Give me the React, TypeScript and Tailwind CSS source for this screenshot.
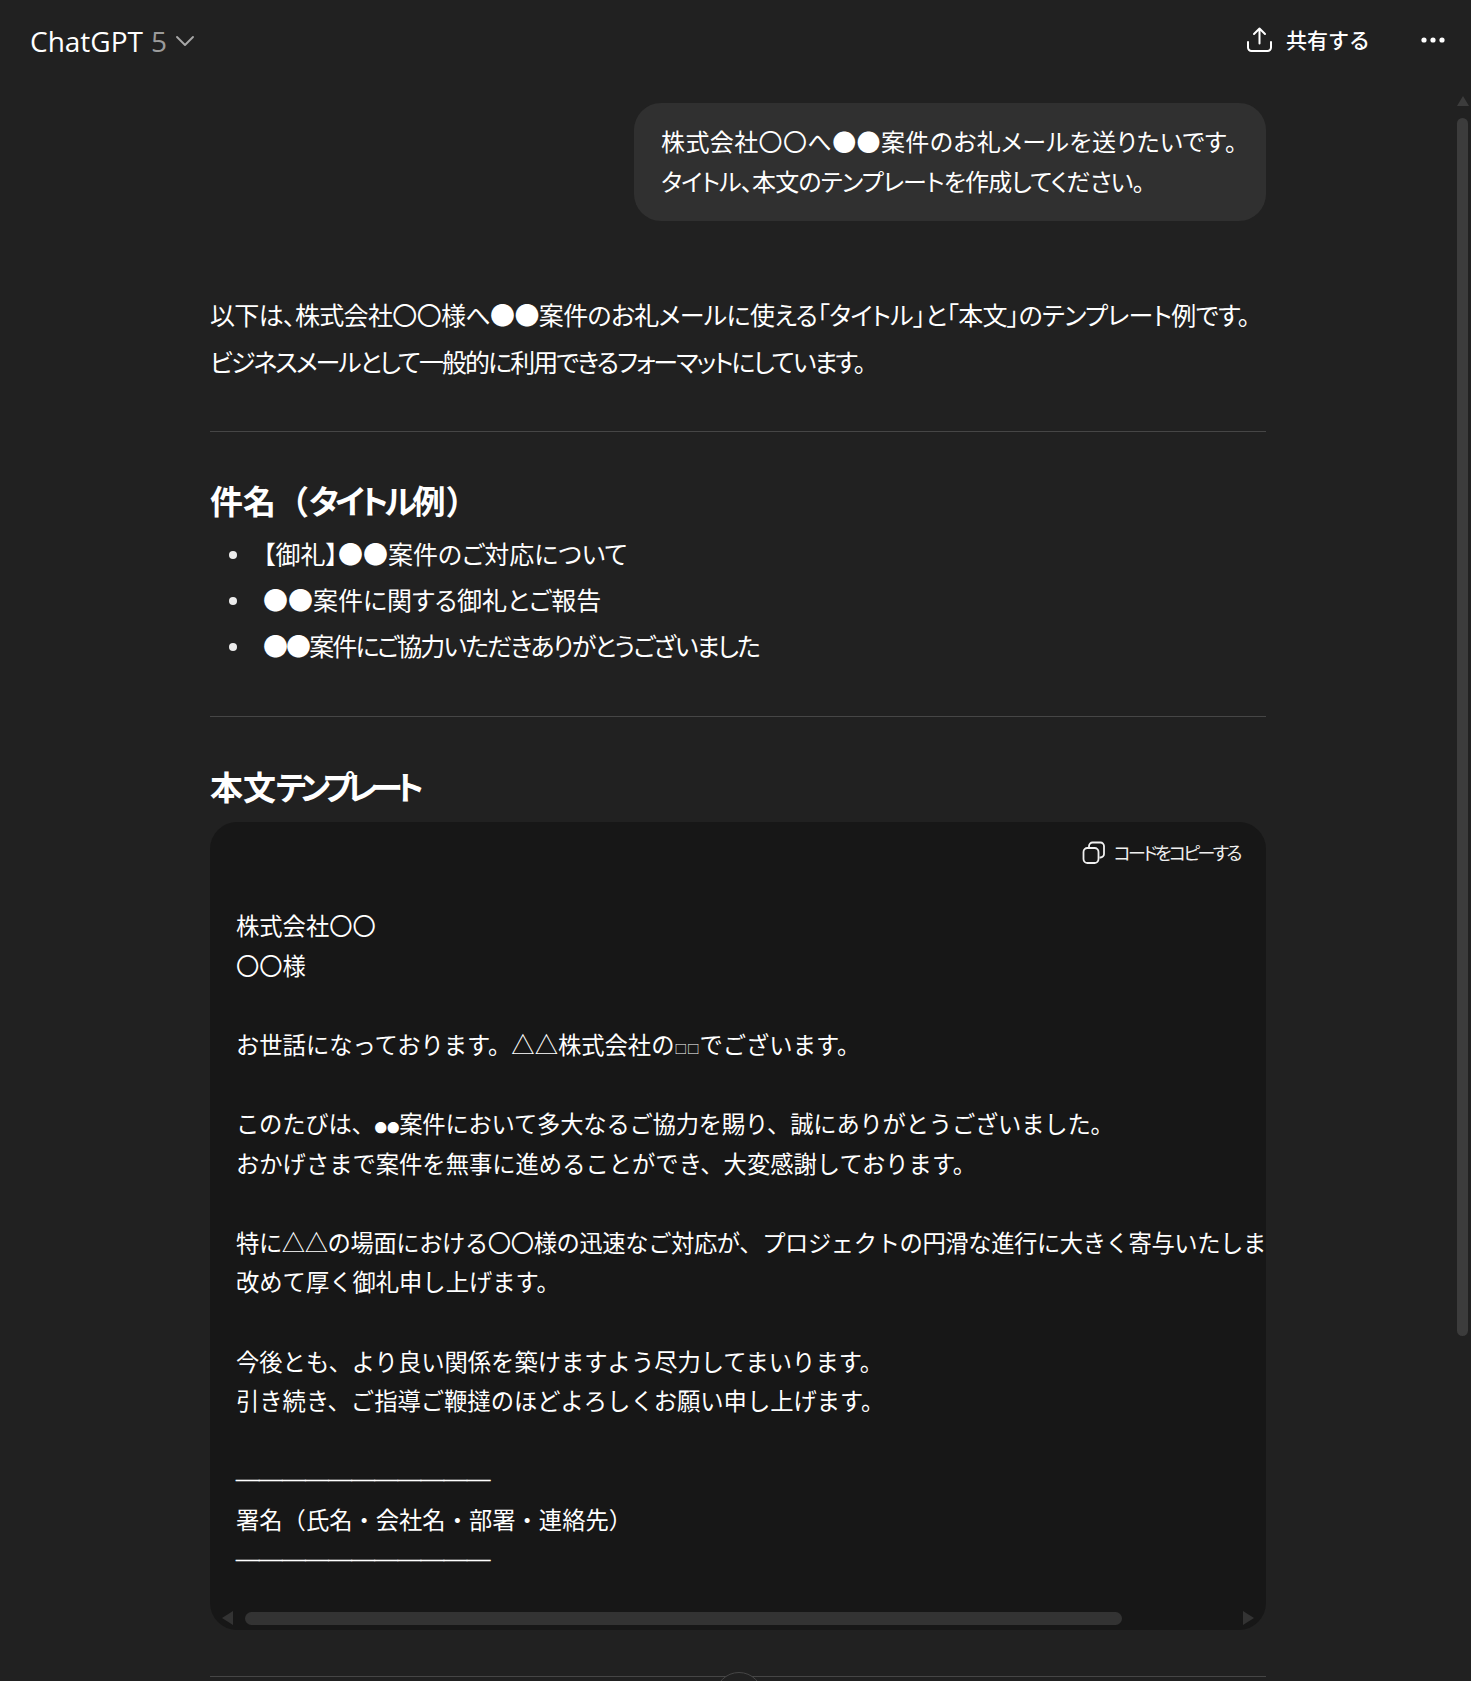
import { ChevronDown, ArrowDown } from "lucide-react";

const jp = "font-['Noto_Sans_CJK_JP','Noto_Sans',sans-serif]";
const palt = "[font-feature-settings:'palt']";

const codeLines = [
  { text: "株式会社〇〇" },
  { text: "〇〇様" },
  { text: "" },
  { text: "お世話になっております。△△株式会社の□□でございます。" },
  { text: "" },
  { text: "このたびは、●●案件において多大なるご協力を賜り、誠にありがとうございました。", tight: "tracking-[-0.2px]" },
  { text: "おかげさまで案件を無事に進めることができ、大変感謝しております。" },
  { text: "" },
  { text: "特に△△の場面における〇〇様の迅速なご対応が、プロジェクトの円滑な進行に大きく寄与いたしました。", tight: "tracking-[-0.4px]" },
  { text: "改めて厚く御礼申し上げます。" },
  { text: "" },
  { text: "今後とも、より良い関係を築けますよう尽力してまいります。" },
  { text: "引き続き、ご指導ご鞭撻のほどよろしくお願い申し上げます。" },
  { text: "" },
  { text: "───────────", tight: "tracking-[-0.2px]" },
  { text: "署名（氏名・会社名・部署・連絡先）" },
  { text: "───────────", tight: "tracking-[-0.2px]" },
];

const titles = [
  { text: "【御礼】●●案件のご対応について", className: "" },
  { text: "●●案件に関する御礼とご報告", className: "" },
  { text: "●●案件にご協力いただきありがとうございました", className: "tracking-[-1.9px]" },
];

// the ●● and □□ placeholders are half width in the code block
function CodeLine({ text, tight }: { text: string; tight?: string }) {
  if (text.startsWith("─")) {
    return <div className={`h-[39.6px] [-webkit-text-stroke:0.7px_white] ${tight ?? ""}`}>{text}</div>;
  }
  return (
    <div className={`h-[39.6px] ${tight ?? ""}`}>
      {text.split(/([□●]+)/).map((part, i) =>
        /[□●]/.test(part) ? (
          <span key={i} className="text-[12.5px]">
            {part}
          </span>
        ) : (
          part
        ),
      )}
    </div>
  );
}

function Header() {
  return (
    <header className="flex h-[80px] items-center justify-between pl-[30px] pr-[26px]">
      <div className="flex items-center pt-[1px] font-['Open_Sans',sans-serif] text-[28px] text-white">
        <span>ChatGPT</span>
        <span className="ml-[8px] text-[#9b9b9b]">5</span>
        <ChevronDown className="ml-[2px] h-[32px] w-[32px] text-[#a8a8a8]" strokeWidth={1.4} />
      </div>
      <div className="flex items-center pb-[1px]">
        <svg className="h-[27px] w-[27px] text-white" viewBox="0 0 27 27" fill="none" stroke="currentColor" strokeWidth="2" strokeLinecap="round" strokeLinejoin="round">
          <path d="M13.5 17.5V2.5M8 8l5.5-5.5L19 8" />
          <path d="M2 16v5.5a3.5 3.5 0 0 0 3.5 3.5h16a3.5 3.5 0 0 0 3.5-3.5V16" />
        </svg>
        <span className={`ml-[13px] text-[21px] font-medium text-white ${jp}`}>共有する</span>
        <svg className="ml-[51px] h-[6px] w-[24px] text-white" viewBox="0 0 24 6" fill="currentColor">
          <circle cx="3" cy="3" r="2.6" />
          <circle cx="12" cy="3" r="2.6" />
          <circle cx="21" cy="3" r="2.6" />
        </svg>
      </div>
    </header>
  );
}

function CodeBlock() {
  return (
    <div className="relative mt-[13px] h-[808px] overflow-hidden rounded-[27px] bg-[#171717]">
      <div className="flex h-[60px] items-center justify-end pr-[26px] text-[#f0f0f0]">
        <svg className="mr-[9px] h-[23px] w-[23px]" viewBox="0 0 23 23" fill="none" stroke="currentColor" strokeWidth="1.8">
          <rect x="1.5" y="7" width="15" height="15" rx="4" />
          <path d="M7 6V5a3.5 3.5 0 0 1 3.5-3.5h8A3.5 3.5 0 0 1 22 5v8a3.5 3.5 0 0 1-3.5 3.5h-1" />
        </svg>
        <span className={`text-[18px] tracking-[-2.6px] ${palt}`}>コードをコピーする</span>
      </div>
      <div className="whitespace-pre pl-[26px] pt-[24px] text-[23.3px] leading-[39.6px] text-white">
        {codeLines.map((line, i) => (
          <CodeLine key={i} text={line.text} tight={line.tight} />
        ))}
      </div>
      <div className="absolute bottom-[5px] left-0 flex h-[14px] w-full items-center px-[12px]">
        <span className="h-0 w-0 border-y-[7px] border-r-[11px] border-y-transparent border-r-[#333333]" />
        <div className="ml-[12px] h-[13px] w-[877px] rounded-full bg-[#333333]" />
        <span className="ml-auto h-0 w-0 border-y-[7px] border-l-[11px] border-y-transparent border-l-[#333333]" />
      </div>
    </div>
  );
}

export default function App() {
  return (
    <div className={`relative h-[1681px] w-[1471px] overflow-hidden bg-[#212121] ${jp}`}>
      <Header />

      <main className="ml-[210px] w-[1056px]">
        <div className="mt-[23px] flex justify-end">
          <div className={`w-[632px] rounded-[27px] bg-[#303030] px-[27px] pb-[20px] pt-[18px] text-[24px] leading-[40px] text-white ${palt}`}>
            <p className="whitespace-nowrap tracking-[0.4px]">株式会社〇〇へ●●案件のお礼メールを送りたいです。</p>
            <p className="whitespace-nowrap tracking-[-0.8px]">タイトル、本文のテンプレートを作成してください。</p>
          </div>
        </div>

        <div className={`mt-[70px] text-[25px] leading-[47px] text-white ${palt}`}>
          <p className="whitespace-nowrap tracking-[-0.65px]">以下は、株式会社〇〇様へ●●案件のお礼メールに使える「タイトル」と「本文」のテンプレート例です。</p>
          <p className="whitespace-nowrap tracking-[-2px]">ビジネスメールとして一般的に利用できるフォーマットにしています。</p>
        </div>

        <hr className="mt-[46px] border-[#464646]" />

        <h2 className="mt-[45px] text-[33px] font-bold leading-[46px] text-white">
          件名（<span className={`tracking-[-4px] ${palt}`}>タイトル</span>例）
        </h2>
        <ul className={`mt-[7px] text-[25px] leading-[46px] text-white ${palt}`}>
          {titles.map((t) => (
            <li key={t.text} className={`flex items-center whitespace-nowrap pl-[19px] ${t.className}`}>
              <span className="mr-[26px] mt-[4px] h-[8px] w-[8px] shrink-0 rounded-full bg-[#ececec]" />
              {t.text}
            </li>
          ))}
        </ul>

        <hr className="mt-[48px] border-[#464646]" />

        <h2 className={`mt-[46px] text-[33px] font-bold leading-[46px] text-white ${palt}`}>
          本文<span className="tracking-[-6.5px]">テンプレート</span>
        </h2>
        <CodeBlock />

        <hr className="mt-[46px] border-[#464646]" />
      </main>

      {/* scroll down button */}
      <div className="absolute left-[715px] top-[1672px] flex h-[48px] w-[48px] items-center justify-center rounded-full border border-[#464646] bg-[#212121] text-white">
        <ArrowDown className="h-[24px] w-[24px]" />
      </div>

      {/* page scrollbar */}
      <div className="absolute right-[3px] top-[96px] flex w-[11px] flex-col items-center">
        <span className="h-0 w-0 border-x-[6px] border-b-[10px] border-x-transparent border-b-[#3c3c3c]" />
        <div className="mt-[12px] h-[1218px] w-[11px] rounded-full bg-[#3c3c3c]" />
      </div>
    </div>
  );
}
